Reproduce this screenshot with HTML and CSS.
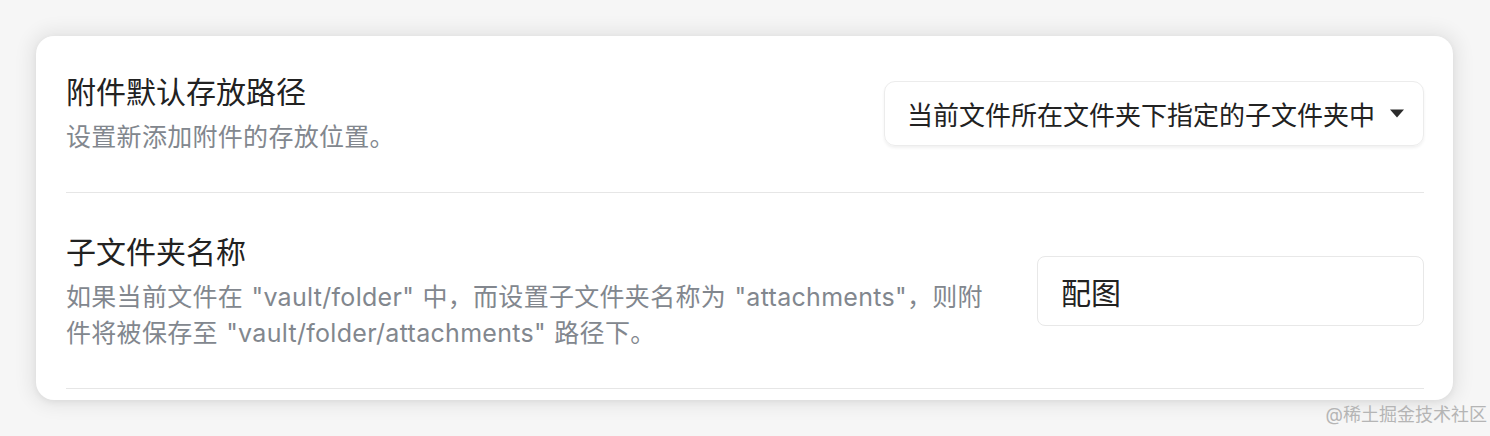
FILE: index.html
```html
<!DOCTYPE html>
<html lang="zh-CN">
<head>
    <meta charset="UTF-8">
    <title>附件设置</title>
    <link rel="stylesheet" href="styles.css">
</head>
<body>
    <div class="card">
        <div class="item">
            <div class="info">
                <div class="name">附件默认存放路径</div>
                <div class="desc">设置新添加附件的存放位置。</div>
            </div>
            <div class="select">
                <span>当前文件所在文件夹下指定的子文件夹中</span>
                <svg class="arrow" width="16" height="9" viewBox="0 0 16 9"><path d="M1 0.5h14L8 8.5z" fill="#2b2b2b"/></svg>
            </div>
        </div>
        <div class="item">
            <div class="info">
                <div class="name">子文件夹名称</div>
                <div class="desc">如果当前文件在 "vault/folder" 中，而设置子文件夹名称为 "attachments"，则附件将被保存至 "vault/folder/attachments" 路径下。</div>
            </div>
            <input class="field" type="text" value="配图">
        </div>
    </div>
    <div class="mark">@稀土掘金技术社区</div>
</body>
</html>
```

FILE: styles.css
```css
body{
    margin: 0;
    background: #f6f6f6;
    font-family: Inter, "Noto Sans CJK SC", sans-serif;
    height: 436px;
    position: relative;
    overflow: hidden;
}
.card{
    margin: 36px 37px 0 36px;
    background: #fff;
    border-radius: 18px;
    padding: 0 29px 11px 30px;
    box-shadow: 0 0 18px 6px rgba(0,0,0,0.07), 0 2px 6px rgba(0,0,0,0.06);
}
.item{
    display: flex;
    align-items: center;
    gap: 44px;
    padding: 38px 0 37px;
    border-bottom: 1px solid #e6e6e6;
}
.item:first-child{padding-top: 35px;}
.info{flex: 1;}
.name{
    font-size: 30px;
    line-height: 42px;
    color: #222;
}
.desc{
    margin-top: 6px;
    font-size: 25px;
    line-height: 36px;
    color: #82878e;
    letter-spacing: 0.3px;
    word-spacing: 1px;
}
.select{
    display: flex;
    align-items: center;
    justify-content: space-between;
    width: 540px;
    height: 65px;
    box-sizing: border-box;
    padding: 0 18px 0 22px;
    border: 1px solid #ececec;
    border-radius: 11px;
    box-shadow: 0 2px 3px rgba(0,0,0,0.06);
    font-size: 26px;
    color: #222;
}
.field{
    width: 387px;
    height: 70px;
    box-sizing: border-box;
    padding: 0 23px;
    border: 1px solid #e8e8e8;
    border-radius: 8px;
    font-family: Inter, "Noto Sans CJK SC", sans-serif;
    font-size: 30px;
    color: #222;
    outline: none;
}
.mark{
    position: absolute;
    right: 3px;
    bottom: 10px;
    font-size: 18px;
    color: #b5b5b5;
}
```
